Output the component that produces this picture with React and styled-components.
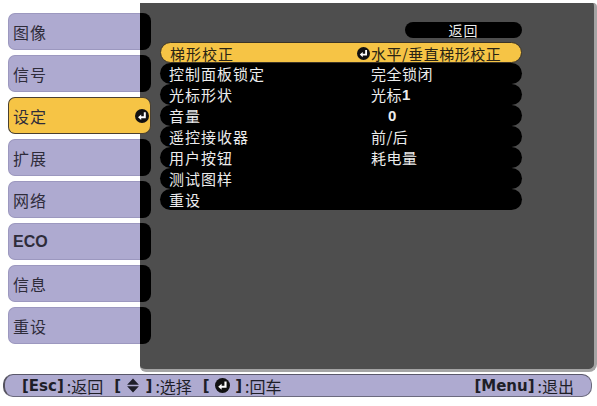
import React from "react";
import styled, { createGlobalStyle } from "styled-components";

const Global = createGlobalStyle`
  html, body { margin: 0; padding: 0; background: #fff; }
  body { font-family: "Noto Sans CJK SC", "Noto Sans", sans-serif; }
`;

const Screen = styled.div`
  width: 597px;
  height: 406px;
  display: flex;
  flex-direction: column;
  overflow: hidden;
  background: #fff;
`;

const Main = styled.div`
  display: flex;
  padding-top: 3px;
  height: 353px;
`;

const TabColumn = styled.div`
  width: 135px;
  margin-left: 8px;
  padding-top: 10px;
  display: flex;
  flex-direction: column;
  gap: 5px;
  position: relative;
  z-index: 2;
`;

const Tab = styled.div`
  position: relative;
  height: 37px;
  box-sizing: border-box;
  display: flex;
  align-items: center;
  padding-left: 4px;
  border-radius: 7px 0 0 7px;
  background: ${(p) => (p.$active ? "#f6c445" : "#aeaad0")};
  border: 1px solid ${(p) => (p.$active ? "#4a4030" : "#9c98bf")};
  border-right: none;
  color: #2e2c3a;
  font-size: 16px;
  letter-spacing: ${(p) => (p.$bold ? "0" : "1px")};
  font-weight: ${(p) => (p.$bold ? 700 : 400)};
  font-family: ${(p) =>
    p.$bold ? '"Liberation Sans", sans-serif' : '"Noto Sans CJK SC", sans-serif'};
  &::after {
    content: "";
    position: absolute;
    top: -1px;
    bottom: -1px;
    right: -11px;
    width: 11px;
    border-radius: 0 8px 8px 0;
    background: ${(p) => (p.$active ? "#f6c445" : "#000")};
    border: ${(p) => (p.$active ? "1px solid #4a4030" : "none")};
    border-left: none;
    box-sizing: border-box;
  }
`;

const TabIcon = styled.span`
  position: absolute;
  right: -9px;
  top: 11px;
  z-index: 3;
  display: flex;
`;

const Panel = styled.div`
  width: 444px;
  height: 347px;
  background: #4e4e4e;
  border-right: 3px solid #a4a4a4;
  border-bottom: 3px solid #a4a4a4;
  border-radius: 0 4px 8px 6px;
  padding: 19px 0 0 20px;
  box-sizing: content-box;
  display: flex;
  flex-direction: column;
`;

const Content = styled.div`
  width: 362px;
  display: flex;
  flex-direction: column;
`;

const HeaderRow = styled.div`
  display: flex;
  justify-content: flex-end;
  margin-bottom: 4px;
`;

const BackPill = styled.div`
  width: 117px;
  height: 16px;
  border-radius: 8px;
  background: #000;
  color: #eaeaea;
  font-size: 14px;
  line-height: 16px;
  text-align: center;
  letter-spacing: 1px;
`;

const List = styled.div`
  display: flex;
  flex-direction: column;
`;

const Row = styled.div`
  height: 21px;
  box-sizing: border-box;
  border-radius: 10.5px;
  display: grid;
  grid-template-columns: 202px 1fr;
  align-items: center;
  padding-left: 9px;
  font-size: 15px;
  letter-spacing: 1px;
  line-height: 21px;
  background: ${(p) => (p.$active ? "#f6c445" : "#000")};
  color: ${(p) => (p.$active ? "#2a2414" : "#ececec")};
  border: ${(p) => (p.$active ? "1px solid #3c3426" : "none")};
`;

const Label = styled.span`
  white-space: nowrap;
`;

const Value = styled.span`
  display: flex;
  align-items: center;
  white-space: nowrap;
  letter-spacing: 0.5px;
  padding-left: ${(p) => (p.$indent ? "17px" : "0")};
`;

const Digit = styled.span`
  font-family: "Liberation Sans", sans-serif;
  font-weight: 700;
`;

const ValueIcon = styled.span`
  display: flex;
  margin-left: -15px;
  margin-right: 1px;
`;

const Footer = styled.div`
  margin: 18px 5px 0 3px;
  height: 23px;
  box-sizing: border-box;
  border-radius: 10px;
  background: #aeaad0;
  border: 1px solid #6c6a7e;
  border-top-color: #5a586a;
  border-left: 2px solid #55535f;
  display: flex;
  align-items: center;
  justify-content: space-between;
  padding: 0 17px 0 17px;
  color: #1e1e28;
  font-size: 16px;
`;

const Hints = styled.div`
  display: flex;
  align-items: center;
  gap: 11px;
`;

const Hint = styled.span`
  display: flex;
  align-items: center;
`;

const Key = styled.span`
  display: flex;
  align-items: center;
  font-family: "DejaVu Sans", sans-serif;
  font-weight: 700;
  font-size: 15px;
`;

const KeyText = styled.span`
  font-family: "Noto Sans CJK SC", sans-serif;
  font-size: 16px;
  margin-left: 3px;
`;

const EnterIcon = ({ size = 14 }) => (
  <svg width={size} height={size} viewBox="0 0 14 14">
    <circle cx="7" cy="7" r="7" fill="#111" />
    <path d="M9.8 3.2 V8.2 H5.5" stroke="#fff" strokeWidth="2" fill="none" />
    <path d="M3 8.2 L6.2 5.4 L6.2 11 Z" fill="#fff" />
  </svg>
);

const UpDownIcon = () => (
  <svg width="14" height="15" viewBox="0 0 12 14">
    <path d="M6 0.5 L11.5 6.3 H0.5 Z" fill="#1e1e28" />
    <path d="M6 13.5 L11.5 7.7 H0.5 Z" fill="#1e1e28" />
  </svg>
);

const tabs = [
  { label: "图像" },
  { label: "信号" },
  { label: "设定", active: true },
  { label: "扩展" },
  { label: "网络" },
  { label: "ECO", bold: true },
  { label: "信息" },
  { label: "重设" },
];

const rows = [
  { label: "梯形校正", value: "水平/垂直梯形校正", active: true },
  { label: "控制面板锁定", value: "完全锁闭" },
  { label: "光标形状", value: "光标", digit: "1" },
  { label: "音量", value: "", digit: "0", indent: true },
  { label: "遥控接收器", value: "前/后" },
  { label: "用户按钮", value: "耗电量" },
  { label: "测试图样", value: "" },
  { label: "重设", value: "" },
];

export default function App() {
  return (
    <>
      <Global />
      <Screen>
        <Main>
          <TabColumn>
            {tabs.map((t) => (
              <Tab key={t.label} $active={t.active} $bold={t.bold}>
                {t.label}
                {t.active && (
                  <TabIcon>
                    <EnterIcon />
                  </TabIcon>
                )}
              </Tab>
            ))}
          </TabColumn>
          <Panel>
            <Content>
              <HeaderRow>
                <BackPill>返回</BackPill>
              </HeaderRow>
              <List>
                {rows.map((r) => (
                  <Row key={r.label} $active={r.active}>
                    <Label>{r.label}</Label>
                    <Value $indent={r.indent}>
                      {r.active && (
                        <ValueIcon>
                          <EnterIcon size={13} />
                        </ValueIcon>
                      )}
                      {r.value}
                      {r.digit && <Digit>{r.digit}</Digit>}
                    </Value>
                  </Row>
                ))}
              </List>
            </Content>
          </Panel>
        </Main>
        <Footer>
          <Hints>
            <Hint>
              <Key>[Esc]</Key>
              <KeyText>:返回</KeyText>
            </Hint>
            <Hint>
              <Key>
                [&nbsp;<UpDownIcon />&nbsp;]
              </Key>
              <KeyText>:选择</KeyText>
            </Hint>
            <Hint>
              <Key>
                [&nbsp;<EnterIcon size={15} />&nbsp;]
              </Key>
              <KeyText>:回车</KeyText>
            </Hint>
          </Hints>
          <Hint>
            <Key>[Menu]</Key>
            <KeyText>:退出</KeyText>
          </Hint>
        </Footer>
      </Screen>
    </>
  );
}
